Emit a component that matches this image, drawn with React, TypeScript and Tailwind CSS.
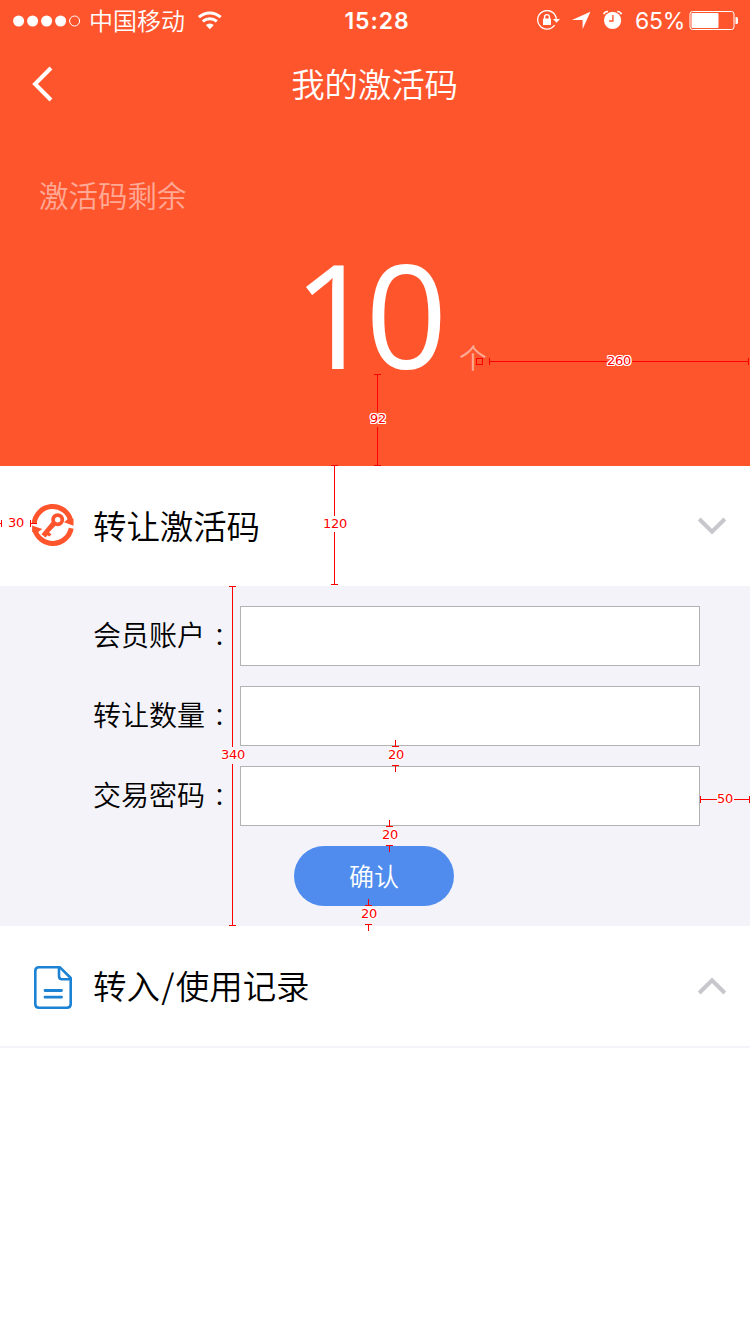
import type { ReactNode } from 'react';

const measureLines = [
  // horizontal
  'M489 361.5H607M632 361.5H749M489.5 358v7M748.5 358v7',
  'M0 523.5H2M1.5 520v7M30.5 520v7M31 523.5H37',
  'M700 799.5H717M734 799.5H750M700.5 796v7M749.5 796v7',
  // vertical
  'M377.5 374V412M377.5 427V466M374 374.5h7M374 465.5h7',
  'M334.5 465V516M334.5 532V585M331 465.5h7M331 584.5h7',
  'M232.5 586V747M232.5 764V926M229 586.5h7M229 925.5h7',
  'M389.5 820V826M386 826.5h7M386 845.5h7',
  'M368.5 899V905M365 905.5h7M365 924.5h7M368.5 924V931',
  'M395.5 740V746M392 746.5h7M392 765.5h7',
  'M395.5 765V772M389.5 845V852',
];

function Measure({ className, children }: { className: string; children: string }) {
  return (
    <span
      className={`absolute -translate-x-1/2 font-['DejaVu_Sans',sans-serif] text-[13px] leading-[16px] tracking-[-0.2px] text-[#f00] ${className}`}
    >
      {children}
    </span>
  );
}

const halo =
  '[text-shadow:1px_0_#fff,-1px_0_#fff,0_1px_#fff,0_-1px_#fff,1px_1px_#fff,-1px_-1px_#fff,1px_-1px_#fff,-1px_1px_#fff]';

function Measurements() {
  return (
    <div className="pointer-events-none absolute inset-0">
      <svg width="750" height="1334" fill="none" stroke="#f00" className="absolute inset-0">
        {measureLines.map((d) => (
          <path key={d} d={d} />
        ))}
        <rect x="476.5" y="358.5" width="6" height="6" />
      </svg>
      <Measure className={`left-[619px] top-[353px] ${halo}`}>260</Measure>
      <Measure className={`left-[378px] top-[411px] ${halo}`}>92</Measure>
      <Measure className="left-[16px] top-[515px]">30</Measure>
      <Measure className="left-[335px] top-[516px]">120</Measure>
      <Measure className={`left-[233px] top-[747px] ${halo}`}>340</Measure>
      <Measure className={`left-[396px] top-[747px] ${halo}`}>20</Measure>
      <Measure className={`left-[725px] top-[791px] ${halo}`}>50</Measure>
      <Measure className={`left-[390px] top-[827px] ${halo}`}>20</Measure>
      <Measure className={`left-[369px] top-[906px] ${halo}`}>20</Measure>
    </div>
  );
}

function StatusBar() {
  return (
    <div className="grid h-10 grid-cols-[344px_66px_1fr] items-center">
      <div className="flex items-center pl-[13px]">
        <svg width="68" height="12" viewBox="0 0 68 12" fill="#fff" className="mt-px">
          <circle cx="5.6" cy="6" r="5.5" />
          <circle cx="19.6" cy="6" r="5.5" />
          <circle cx="33.6" cy="6" r="5.5" />
          <circle cx="47.6" cy="6" r="5.5" />
          <circle cx="61.6" cy="6" r="5" fill="none" stroke="#fff" />
        </svg>
        <span className="ml-[8px] text-2xl font-[350] leading-[38px]">中国移动</span>
        <svg width="26" height="20" viewBox="0 0 26 20" fill="none" stroke="#fff" strokeWidth="3" className="ml-[12px]">
          <path d="M1.900 7.200A16 16 0 0 1 23.700 7.200" />
          <path d="M5.800 11.400A10.500 10.500 0 0 1 19.800 11.400" />
          <path d="M12.800 19.200L8.800 15.100Q12.800 11.800 16.800 15.100Z" fill="#fff" stroke="none" />
        </svg>
      </div>
      <span className="mt-[2px] text-center font-['Inter',sans-serif] text-[23px] font-semibold leading-[38px] tracking-[0.900px]">
        15:28
      </span>
      <div className="flex items-center pl-[127px]">
        <svg width="23" height="20" viewBox="0 0 23 20" fill="none" stroke="#fff" strokeWidth="1.3">
          <path d="M17.6 15.2A9.3 9.3 0 1 1 19.3 9.5" />
          <path d="M16 9h7l-3.5 3.7Z" fill="#fff" stroke="none" />
          <rect x="6" y="8.5" width="8" height="6.5" rx=".6" fill="#fff" stroke="none" />
          <path d="M7.6 9V7a2.4 2.4 0 0 1 4.8 0v2" strokeWidth="1.4" />
        </svg>
        <svg width="19" height="19" viewBox="0 0 19 19" fill="#fff" className="ml-[12px] mt-px">
          <path d="M0 9L18.4 .8L10.6 18.2V9Z" />
        </svg>
        <svg width="20" height="20" viewBox="0 0 20 20" className="ml-[12px]">
          <circle cx="9.6" cy="10.3" r="8.6" fill="#fff" />
          <path d="M.7 4.3Q1.6 1.6 5 1.5M18.5 4.3Q17.6 1.6 14.2 1.5" fill="none" stroke="#fff" strokeWidth="1.6" />
          <path d="M9.900 5v6H6" fill="none" stroke="#ff552d" strokeWidth="1.400" />
        </svg>
        <span className="ml-[12px] mt-[2px] w-[52px] font-['Inter',sans-serif] text-[23px] leading-[38px] tracking-[-0.300px]">
          65%
        </span>
        <svg width="50" height="20" viewBox="0 0 50 20" className="ml-[2px] shrink-0">
          <rect x="1" y="1.500" width="44" height="18" rx="2.500" fill="none" stroke="#fff" />
          <rect x="2.500" y="3" width="27" height="15" rx="1" fill="#fff" />
          <path d="M46.500 7h1q1.500 0 1.500 1.500v4q0 1.500-1.500 1.500h-1Z" fill="#fff" />
        </svg>
      </div>
    </div>
  );
}

function KeyIcon() {
  return (
    <svg width="44" height="44" viewBox="0 0 44 44" fill="none" stroke="#ff552d" strokeWidth="5" className="-mt-[2px]">
      <path d="M3.100 21A18.700 18.900 0 0 1 39.800 17.500" />
      <path d="M40.200 25.200A18.700 18.700 0 0 1 3.600 26" />
      <g fill="#ff552d" stroke="none">
        <path d="M33 19.300L37.500 15.500L42.500 16V22.800Z" />
        <path d="M11.300 26L6.500 29.500L1.200 29L1.100 22.500Z" />
        <path d="M20.800 18.700L24.700 22.600L18.100 29.200L20.500 31.600L18.300 33.500L16.500 32.300L14.600 34.500L10.500 31.300Z" />
      </g>
      <circle cx="26.700" cy="16.700" r="4.600" strokeWidth="3.800" />
    </svg>
  );
}

function DocumentIcon() {
  return (
    <svg width="44" height="44" viewBox="0 0 44 44" fill="none" stroke="#1c82d4" strokeWidth="2.600" strokeLinejoin="round" className="mt-[3px]">
      <path d="M29 1.300H8Q4.300 1.300 4.300 5V38Q4.300 41.700 8 41.700H36Q39.700 41.700 39.700 38V12Z" />
      <path d="M28 2V10Q28 13.200 31 13.200H39" />
      <path d="M14 24.500H30.500M14 31.200H30.500" strokeLinecap="round" strokeWidth="2.800" />
    </svg>
  );
}

function SectionRow({ icon, title, open }: { icon: ReactNode; title: ReactNode; open: boolean }) {
  return (
    <div className="flex h-[120px] items-center bg-white pl-[31px] pr-6">
      {icon}
      <span className="-mt-[2px] ml-[18px] flex-1 text-[33.500px] font-[350] leading-[48px] tracking-[-0.100px] text-black">
        {title}
      </span>
      <svg width="28" height="18" viewBox="0 0 28 18" fill="none" stroke="#c7c7cc" strokeWidth="4">
        <path d={open ? 'M1.200 2L14 14.700L26.800 2' : 'M1.200 16L14 3.300L26.800 16'} />
      </svg>
    </div>
  );
}

function Field({ label, type }: { label: string; type: string }) {
  return (
    <label className="flex h-[60px] items-center pl-[93px] pr-[50px]">
      <span className="-mt-[2px] w-[147px] whitespace-nowrap text-[28px] font-[350] leading-[60px] text-black">
        {label}
        <span className="pl-[2.500px] font-['Noto_Sans_CJK_TC',sans-serif] text-[24px]">：</span>
      </span>
      <input type={type} className="h-[60px] w-[460px] border border-[#b2b2b2] bg-white px-4 text-[28px] outline-none" />
    </label>
  );
}

export default function App() {
  return (
    <div className="relative h-[1334px] w-[750px] overflow-hidden bg-white font-['Noto_Sans_CJK_SC',sans-serif]">
      <header className="h-[466px] bg-[#ff552d] text-white">
        <StatusBar />
        <div className="grid h-[88px] grid-cols-[150px_449px_151px] items-center">
          <svg width="22" height="36" viewBox="0 0 22 36" fill="none" stroke="#fff" strokeWidth="4" className="ml-8">
            <path d="M19 2L3 18L19 34" />
          </svg>
          <h1 className="-mt-[2px] text-center text-[33.500px] font-[350] leading-[48px] tracking-[-0.200px]">我的激活码</h1>
        </div>
        <p className="pl-[39px] pt-[46px] text-[29.500px] font-[350] leading-[40px] text-white/50">激活码剩余</p>
        <div className="flex items-baseline pl-[293px]">
          <span className="mt-[17px] w-[155px] font-['Open_Sans',sans-serif] text-[144px] leading-[164px] tracking-[-10px]">
            10
          </span>
          <span className="ml-[11px] text-[28px] font-[350] leading-10 text-white/50">个</span>
        </div>
      </header>

      <SectionRow icon={<KeyIcon />} title="转让激活码" open />

      <form className="flex h-[340px] flex-col gap-5 bg-[#f4f3f9] pt-5">
        <Field label="会员账户" type="text" />
        <Field label="转让数量" type="text" />
        <Field label="交易密码" type="password" />
        <button
          type="button"
          className="ml-[294px] h-[60px] w-[160px] rounded-full bg-[#508cee] pb-px text-[25px] font-[350] leading-[59px] text-white"
        >
          确认
        </button>
      </form>

      <div className="h-[122px] border-b-2 border-[#f4f3f9]">
        <SectionRow
          icon={<DocumentIcon />}
          title={
            <>
              转入<span className="px-[1.500px]">/</span>使用记录
            </>
          }
          open={false}
        />
      </div>

      <Measurements />
    </div>
  );
}
